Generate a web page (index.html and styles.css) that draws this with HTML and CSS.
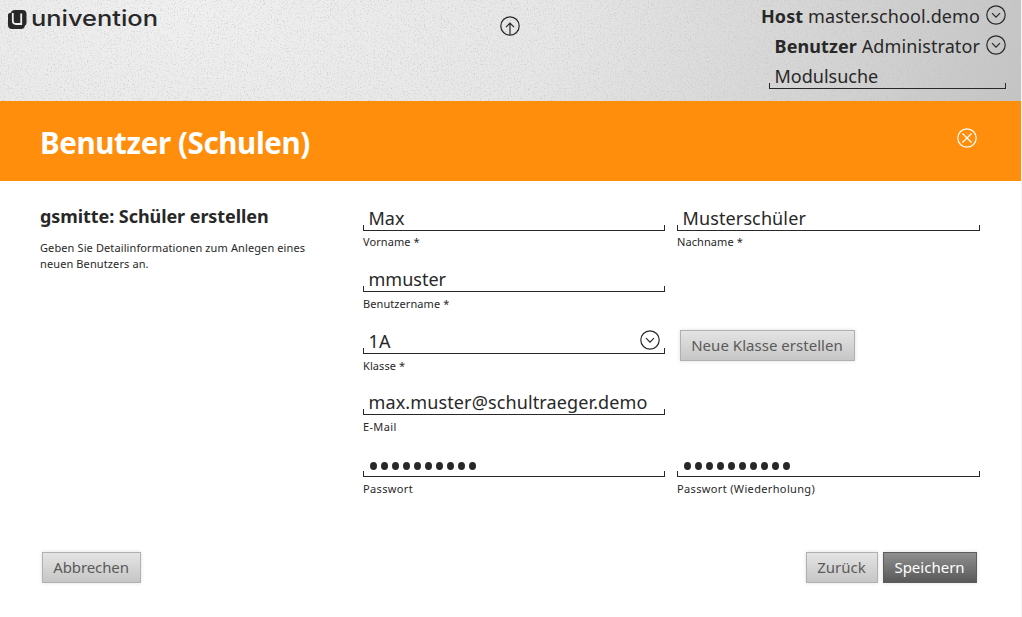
FILE: index.html
```html
<!DOCTYPE html>
<html lang="de">
<head>
<meta charset="utf-8">
<title>Univention – Benutzer (Schulen)</title>
<link rel="stylesheet" href="styles.css">
</head>
<body>
<svg class="defs" aria-hidden="true">
  <symbol id="chevron" viewBox="0 0 20 20"><circle cx="10" cy="10" r="9.2"/><path d="M6 8.2l4 4 4-4"/></symbol>
  <symbol id="up" viewBox="0 0 20 20"><circle cx="10" cy="10" r="9.2"/><path d="M6 11.2l4-4 4 4M10 7.2v11.5"/></symbol>
  <symbol id="close" viewBox="0 0 20 20"><circle cx="10" cy="10" r="9.2"/><path d="M5.5 5.5l9 9M14.5 5.5l-9 9"/></symbol>
</svg>
<div class="page">
  <header class="top">
    <svg class="grain" aria-hidden="true">
      <filter id="speckle" x="0" y="0" width="100%" height="100%">
        <feTurbulence type="fractalNoise" baseFrequency="0.7" numOctaves="2" seed="4"/>
        <feColorMatrix values="0 0 0 0 0.5  0 0 0 0 0.5  0 0 0 0 0.5  1.8 0 0 0 -0.95"/>
      </filter>
      <rect width="100%" height="100%" filter="url(#speckle)"/>
    </svg>
    <svg class="logo" viewBox="0 0 152 24" role="img" aria-label="univention">
      <path d="M7 0H14.5Q18.5 0 18.5 4V13Q18.5 15 17 15.5Q16.5 19 13 19H4Q0 19 0 15V5Q0 3 3 2.8Q3.5 0 7 0Z"/>
      <path class="cut" d="M4.8 3V10.5Q4.8 14 8 14H13.2V3.5"/>
      <text class="word" x="23" y="16" textLength="127" lengthAdjust="spacingAndGlyphs">univention</text>
    </svg>
    <svg class="icon up"><use href="#up"/></svg>
    <div class="session">
      <div class="who"><span><b>Host</b> master.school.demo</span><svg class="icon"><use href="#chevron"/></svg></div>
      <div class="who"><span><b>Benutzer</b> Administrator</span><svg class="icon"><use href="#chevron"/></svg></div>
      <div class="box search">Modulsuche</div>
    </div>
  </header>
  <div class="title"><h1>Benutzer (Schulen)</h1><svg class="icon"><use href="#close"/></svg></div>
  <main class="content">
    <section class="intro">
      <h2>gsmitte: Schüler erstellen</h2>
      <p>Geben Sie Detailinformationen zum Anlegen eines<br>neuen Benutzers an.</p>
    </section>
    <form class="fields">
      <div class="field"><div class="box">Max</div><label class="required">Vorname *</label></div>
      <div class="field"><div class="box wide">Musterschüler</div><label class="required">Nachname *</label></div>
      <div class="field first low"><div class="box">mmuster</div><label class="required">Benutzername *</label></div>
      <div class="field first low"><div class="box wide"><span>1A</span><svg class="icon"><use href="#chevron"/></svg></div><label class="required">Klasse *</label></div>
      <div class="aside"><button type="button" class="tight">Neue Klasse erstellen</button></div>
      <div class="field first low"><div class="box wide">max.muster@schultraeger.demo</div><label>E-Mail</label></div>
      <div class="field first low"><div class="box dots"><i></i><i></i><i></i><i></i><i></i><i></i><i></i><i></i><i></i><i></i></div><label>Passwort</label></div>
      <div class="field low"><div class="box dots"><i></i><i></i><i></i><i></i><i></i><i></i><i></i><i></i><i></i><i></i></div><label>Passwort (Wiederholung)</label></div>
    </form>
  </main>
  <footer class="actions">
    <button type="button" class="cancel">Abbrechen</button>
    <div class="right"><button type="button" class="back">Zurück</button><button type="button" class="primary">Speichern</button></div>
  </footer>
  <i class="grip"></i>
</div>
</body>
</html>
```
FILE: styles.css
```css
* { box-sizing: border-box; }
body { margin: 0; background: #fff; color: #282828; font-family: "Noto Sans", sans-serif; font-size: 18px; }
.page { position: relative; width: 1022px; height: 617px; display: flex; flex-direction: column; border-right: 1px solid #f4f4f4; overflow: hidden; }
.defs { position: absolute; width: 0; height: 0; }
.icon { width: 20px; height: 20px; flex: none; fill: none; stroke: #282828; stroke-width: 1.2; }
.top { position: relative; flex: none; height: 101px; display: flex; justify-content: space-between; padding: 0 15px 0 8px; background: radial-gradient(ellipse 950px 450px at 180px 10px, #f0f0f0 0%, #e6e6e6 40%, #d0d0d0 75%, #bdbdbd 100%); }
.grain { position: absolute; inset: 0; width: 100%; height: 100%; }
.logo { position: relative; width: 152px; height: 24px; margin-top: 10px; fill: #282828; overflow: visible; }
.cut { fill: none; stroke: #eee; stroke-width: 1.8; }
.word { font-family: Inter, sans-serif; font-size: 22px; font-weight: 500; }
.up { position: absolute; left: 500px; top: 16px; }
.session { position: relative; display: flex; flex-direction: column; align-items: flex-end; }
.who { height: 30px; display: flex; align-items: center; gap: 6px; line-height: 30px; letter-spacing: .1px; }
.who > span { padding-top: 1px; }
.box { height: 31px; display: flex; align-items: center; justify-content: space-between; padding: 6px 4px 0 4.5px; border: solid #282828; border-width: 0 1px 1px; border-image: linear-gradient(to top, #282828 6px, transparent 6px) 1; white-space: nowrap; }
.box .icon { margin-top: -2px; }
.wide { letter-spacing: .12px; }
.search { width: 237px; height: 29px; padding-top: 4px; }
.title { flex: none; height: 80px; display: flex; justify-content: space-between; padding: 27px 44px 0 40px; background: #ff8e0c; color: #fff; }
.title .icon { stroke: #fff; }
h1, h2, p { margin: 0; }
h1 { font-size: 29.5px; line-height: 30px; font-weight: 700; letter-spacing: -.38px; }
.content { display: flex; height: 361px; padding: 19px 41px 0 40px; }
.intro { width: 323px; }
h2 { margin-top: -1px; font-size: 18px; line-height: 34px; font-weight: 700; letter-spacing: -.07px; }
p { margin-top: 7px; font-size: 11px; line-height: 16px; letter-spacing: .11px; }
.fields { flex: 1; display: grid; grid-template-columns: 302px 303px; column-gap: 12px; grid-template-rows: 61px 62px 61px 62px 62px; }
.first { grid-column: 1; }
label { display: block; font-size: 11px; line-height: 22px; letter-spacing: .35px; }
.required { letter-spacing: .08px; }
.low label { padding-top: 1px; }
.aside { padding: 7px 0 0 3px; }
.dots { justify-content: flex-start; gap: 4px; padding: 0 6px; }
.dots i { width: 7px; height: 8px; border-radius: 50%; background: #282828; margin-top: 10px; }
button { height: 31px; padding: 0 10px 0 9px; border: 1px solid #b0b0b0; background: linear-gradient(#e4e4e4, #c6c6c6); box-shadow: 0 0 4px rgba(0,0,0,.13); color: #5a5a5a; font: 15px/29px "Noto Sans", sans-serif; white-space: nowrap; }
.tight { width: 175px; letter-spacing: .03px; }
.cancel { width: 99px; letter-spacing: -.1px; }
.back { width: 72px; }
.primary { width: 94px; color: #fff; border-color: #5c5c5c; background: linear-gradient(#8f8f8f, #595959); }
.actions { display: flex; justify-content: space-between; padding: 10px 44px 0 42px; }
.right { display: flex; gap: 5px; }
.grip { position: absolute; right: -1px; top: 316px; width: 1px; height: 9px; background: repeating-linear-gradient(#4c8aa5 0 1px, #a8c8d8 1px 2px); }
```
